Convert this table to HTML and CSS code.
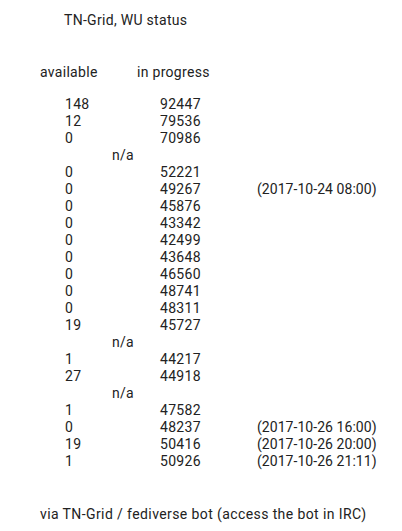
FILE: index.html
```html
<!DOCTYPE html>
<html>
<head>
<meta charset="utf-8">
<link rel="stylesheet" href="styles.css">
</head>
<body>
<div class="page">
  <div class="title">TN-Grid, WU status</div>
  <div class="head"><span class="h1">available</span><span>in progress</span></div>
  <div class="rows">
    <div class="row"><span>148</span><span>92447</span><span></span></div>
    <div class="row"><span>12</span><span>79536</span><span></span></div>
    <div class="row"><span>0</span><span>70986</span><span></span></div>
    <div class="na">n/a</div>
    <div class="row"><span>0</span><span>52221</span><span></span></div>
    <div class="row"><span>0</span><span>49267</span><span class="date">(2017-10-24 08:00)</span></div>
    <div class="row"><span>0</span><span>45876</span><span></span></div>
    <div class="row"><span>0</span><span>43342</span><span></span></div>
    <div class="row"><span>0</span><span>42499</span><span></span></div>
    <div class="row"><span>0</span><span>43648</span><span></span></div>
    <div class="row"><span>0</span><span>46560</span><span></span></div>
    <div class="row"><span>0</span><span>48741</span><span></span></div>
    <div class="row"><span>0</span><span>48311</span><span></span></div>
    <div class="row"><span>19</span><span>45727</span><span></span></div>
    <div class="na">n/a</div>
    <div class="row"><span>1</span><span>44217</span><span></span></div>
    <div class="row"><span>27</span><span>44918</span><span></span></div>
    <div class="na">n/a</div>
    <div class="row"><span>1</span><span>47582</span><span></span></div>
    <div class="row"><span>0</span><span>48237</span><span class="date">(2017-10-26 16:00)</span></div>
    <div class="row"><span>19</span><span>50416</span><span class="date">(2017-10-26 20:00)</span></div>
    <div class="row"><span>1</span><span>50926</span><span class="date">(2017-10-26 21:11)</span></div>
  </div>
  <div class="foot">via TN-Grid / fediverse bot (access the bot in IRC)</div>
</div>
</body>
</html>
```
FILE: styles.css
```css
html, body {
  margin: 0;
  padding: 0;
  background: #ffffff;
}
.page {
  font-family: Roboto, "Open Sans", sans-serif;
  font-size: 14px;
  line-height: 17px;
  letter-spacing: 0.3px;
  color: #222222;
  padding: 12px 0 0 40px;
  width: 362px;
  height: 519px;
}
.title {
  padding-left: 24px;
}
.head {
  display: flex;
  margin-top: 35px;
}
.h1 {
  width: 97px;
}
.rows {
  margin-top: 15px;
  padding-left: 25px;
}
.row {
  display: grid;
  grid-template-columns: 95px 97px auto;
  height: 17px;
}
.date {
  letter-spacing: 0.05px;
}
.na {
  padding-left: 47px;
  height: 17px;
}
.foot {
  margin-top: 36px;
  letter-spacing: 0.4px;
}
```
